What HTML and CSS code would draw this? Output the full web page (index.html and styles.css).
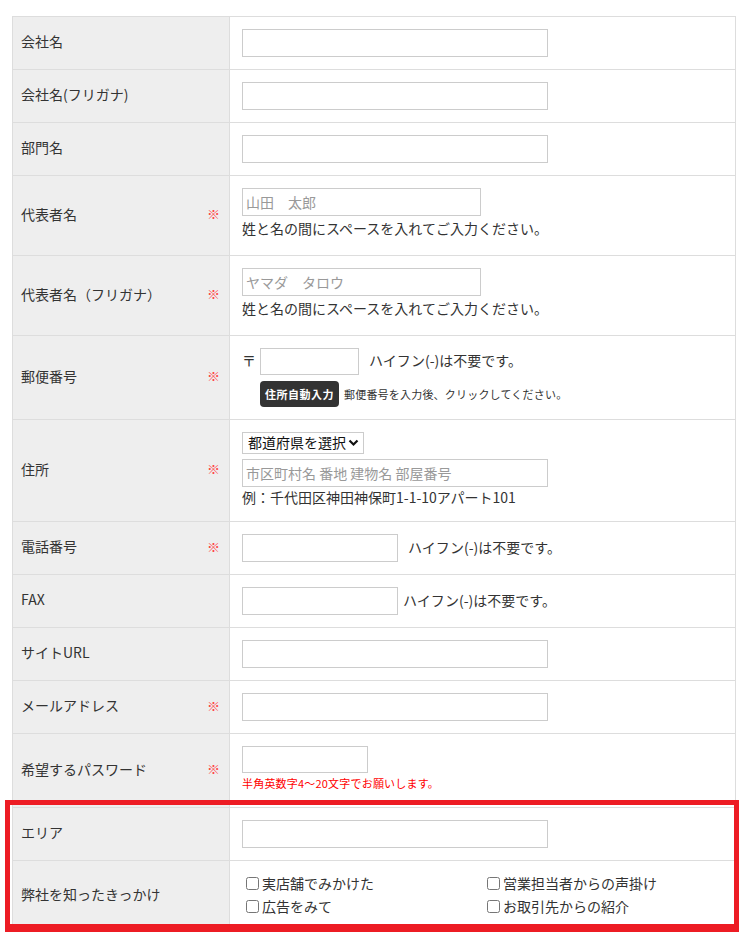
FILE: index.html
```html
<!DOCTYPE html>
<html lang="ja">
<head>
<meta charset="utf-8">
<title>お問い合わせフォーム</title>
<link rel="stylesheet" href="styles.css">
</head>
<body>
<div class="form">
  <div class="row">
    <div class="label"><span>会社名</span></div>
    <div class="field"><input class="in in-l" type="text"></div>
  </div>
  <div class="row">
    <div class="label"><span>会社名(フリガナ)</span></div>
    <div class="field"><input class="in in-l" type="text"></div>
  </div>
  <div class="row">
    <div class="label"><span>部門名</span></div>
    <div class="field"><input class="in in-l" type="text"></div>
  </div>
  <div class="row">
    <div class="label"><span>代表者名</span><span class="req">※</span></div>
    <div class="field">
      <input class="in in-m" type="text" placeholder="山田　太郎">
      <span class="help">姓と名の間にスペースを入れてご入力ください。</span>
    </div>
  </div>
  <div class="row">
    <div class="label"><span>代表者名（フリガナ）</span><span class="req">※</span></div>
    <div class="field">
      <input class="in in-m" type="text" placeholder="ヤマダ　タロウ">
      <span class="help">姓と名の間にスペースを入れてご入力ください。</span>
    </div>
  </div>
  <div class="row">
    <div class="label"><span>郵便番号</span><span class="req">※</span></div>
    <div class="field">
      <div class="inline">
        <span class="zip-mark">〒</span>
        <input class="in in-zip" type="text">
        <span class="note note-gap">ハイフン(-)は不要です。</span>
      </div>
      <div class="inline zip-line">
        <button class="btn" type="button">住所自動入力</button>
        <span class="small">郵便番号を入力後、クリックしてください。</span>
      </div>
    </div>
  </div>
  <div class="row">
    <div class="label"><span>住所</span><span class="req">※</span></div>
    <div class="field">
      <span class="select-wrap">
        <select class="pref">
          <option>都道府県を選択</option>
        </select>
        <svg class="chev" width="11" height="8" viewBox="0 0 11 8"><path d="M1.5 1.5l4 4 4-4" fill="none" stroke="#111" stroke-width="2.2"/></svg>
      </span>
      <input class="in in-l addr" type="text" placeholder="市区町村名 番地 建物名 部屋番号">
      <span class="example">例：千代田区神田神保町1-1-10アパート101</span>
    </div>
  </div>
  <div class="row">
    <div class="label"><span>電話番号</span><span class="req">※</span></div>
    <div class="field">
      <div class="inline">
        <input class="in in-s" type="text">
        <span class="note note-gap">ハイフン(-)は不要です。</span>
      </div>
    </div>
  </div>
  <div class="row">
    <div class="label"><span>FAX</span></div>
    <div class="field">
      <div class="inline">
        <input class="in in-s" type="text">
        <span class="note note-gap-s">ハイフン(-)は不要です。</span>
      </div>
    </div>
  </div>
  <div class="row">
    <div class="label"><span>サイトURL</span></div>
    <div class="field"><input class="in in-l" type="text"></div>
  </div>
  <div class="row">
    <div class="label"><span>メールアドレス</span><span class="req">※</span></div>
    <div class="field"><input class="in in-l" type="text"></div>
  </div>
  <div class="row">
    <div class="label"><span>希望するパスワード</span><span class="req">※</span></div>
    <div class="field">
      <input class="in in-pw" type="password">
      <span class="warn">半角英数字4～20文字でお願いします。</span>
    </div>
  </div>
  <div class="highlight">
    <div class="row">
      <div class="label"><span>エリア</span></div>
      <div class="field"><input class="in in-l" type="text"></div>
    </div>
    <div class="row">
      <div class="label"><span>弊社を知ったきっかけ</span></div>
      <div class="field">
        <div class="checks">
          <label class="check"><input type="checkbox">実店舗でみかけた</label>
          <label class="check"><input type="checkbox">営業担当者からの声掛け</label>
          <label class="check"><input type="checkbox">広告をみて</label>
          <label class="check"><input type="checkbox">お取引先からの紹介</label>
        </div>
      </div>
    </div>
  </div>
</div>
</body>
</html>
```
FILE: styles.css
```css
* { box-sizing: border-box; }

html, body {
  margin: 0;
  padding: 0;
  background: #fff;
}

body {
  font-family: "Noto Sans CJK JP", "Noto Sans", sans-serif;
  font-size: 14px;
  color: #333;
  line-height: 1.5;
}

.form {
  width: 724px;
  margin: 16px 0 0 12px;
  border-top: 1px solid #ddd;
  border-left: 1px solid #ddd;
  border-right: 1px solid #ddd;
}

.row {
  display: grid;
  grid-template-columns: 217px 1fr;
  border-bottom: 1px solid #ddd;
}

.label {
  background: #eee;
  border-right: 1px solid #ddd;
  padding: 0 9px 3px 8px;
  display: flex;
  align-items: center;
  justify-content: space-between;
  color: #333;
}

.req {
  color: #f44;
  font-size: 13px;
}

.field {
  padding: 12px;
  display: flex;
  flex-direction: column;
  align-items: flex-start;
}

.in {
  display: block;
  height: 28px;
  border: 1px solid #ccc;
  background: #fff;
  padding: 0 3px 1px;
  font: inherit;
  font-size: 14px;
  color: #333;
  margin: 0;
  border-radius: 0;
}

.in::placeholder { color: #999; }

.in-l { width: 306px; }
.in-m { width: 239px; }
.in-s { width: 156px; }
.in-zip { width: 99px; height: 27px; margin-left: 4px; }
.in-pw { width: 126px; height: 27px; }

.help {
  display: block;
  margin-bottom: 2px;
  line-height: 25px;
  color: #333;
}

.inline {
  display: flex;
  align-items: center;
}

.zip-mark {
  line-height: 25px;
  padding-bottom: 2px;
  color: #333;
}

.note {
  color: #333;
  line-height: 21px;
  padding-bottom: 2px;
}
.note-gap { margin-left: 10px; }
.note-gap-s { margin-left: 5px; }

.zip-line {
  margin-top: 6px;
  padding-left: 18px;
}

.btn {
  height: 26px;
  padding: 0 5px 1px;
  border: 0;
  border-radius: 4px;
  background: #333;
  color: #fff;
  font-family: inherit;
  font-size: 11px;
  font-weight: bold;
  line-height: 24px;
  letter-spacing: 0.5px;
}

.small {
  margin-left: 5px;
  line-height: 18px;
  padding-bottom: 1px;
  font-size: 11px;
  letter-spacing: 0.2px;
  color: #333;
}

.select-wrap {
  position: relative;
  display: block;
  height: 22px;
}

.pref {
  display: block;
  appearance: none;
  -webkit-appearance: none;
  width: 122px;
  height: 22px;
  border: 1px solid #ccc;
  border-radius: 0;
  background: #fff;
  padding: 0 0 1px 5px;
  font-family: inherit;
  font-size: 14px;
  color: #111;
  line-height: 19px;
  margin: 0;
}

.chev {
  position: absolute;
  right: 5px;
  top: 7px;
  pointer-events: none;
}

.addr { margin-top: 5px; }

.example {
  display: block;
  line-height: 20px;
  margin-bottom: 2px;
  color: #333;
}

.warn {
  display: block;
  line-height: 20px;
  margin-bottom: 2px;
  font-size: 11px;
  letter-spacing: 0.2px;
  color: #f00;
}

.checks {
  display: grid;
  grid-template-columns: 241px 241px;
  grid-auto-rows: 23px;
}

.check {
  display: flex;
  align-items: center;
  height: 23px;
  padding-bottom: 2px;
  color: #333;
}

.check input {
  width: 13px;
  height: 13px;
  margin: 0 3px 0 4px;
}

.highlight {
  position: relative;
}

.highlight::after {
  content: "";
  position: absolute;
  left: -8px;
  right: -4px;
  top: -8px;
  bottom: -1px;
  border: 5px solid #ed1c24;
  border-bottom-width: 9px;
  pointer-events: none;
}
```
